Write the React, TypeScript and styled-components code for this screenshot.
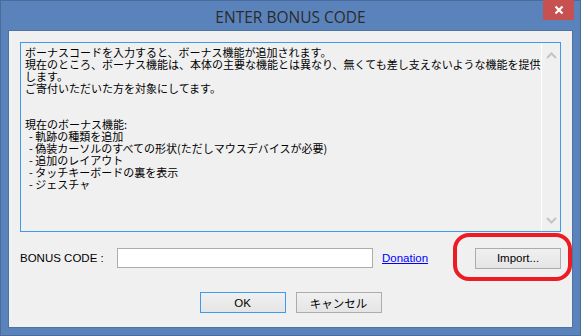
import React from "react";
import styled, { createGlobalStyle } from "styled-components";

const GlobalStyle = createGlobalStyle`
  html, body {
    margin: 0;
    padding: 0;
    background: #5b83bb;
  }
  body {
    font-family: "Liberation Sans", "Noto Sans CJK JP", sans-serif;
  }
`;

const infoLines: { text: string; item?: boolean }[] = [
  { text: "ボーナスコードを入力すると、ボーナス機能が追加されます。" },
  { text: "現在のところ、ボーナス機能は、本体の主要な機能とは異なり、無くても差し支えないような機能を提供" },
  { text: "します。" },
  { text: "ご寄付いただいた方を対象にしてます。" },
  { text: "" },
  { text: "" },
  { text: "現在のボーナス機能:" },
  { text: "- 軌跡の種類を追加", item: true },
  { text: "- 偽装カーソルのすべての形状(ただしマウスデバイスが必要)", item: true },
  { text: "- 追加のレイアウト", item: true },
  { text: "- タッチキーボードの裏を表示", item: true },
  { text: "- ジェスチャ", item: true },
];

export default function App() {
  return (
    <>
      <GlobalStyle />
      <Window>
        <TitleBar>
          <Title>ENTER BONUS CODE</Title>
          <CloseButton aria-label="close">
            <svg width="10" height="10" viewBox="0 0 10 10">
              <path d="M1.5 1.5 L8.5 8.5 M8.5 1.5 L1.5 8.5" stroke="#fff" strokeWidth="2.2" />
            </svg>
          </CloseButton>
        </TitleBar>
        <Client>
          <InfoBox>
            <InfoText>
              {infoLines.map((line, i) => (
                <Line key={i} $item={line.item}>
                  {line.text || "\u00a0"}
                </Line>
              ))}
            </InfoText>
            <ScrollBar>
              <svg width="11" height="7" viewBox="0 0 11 7">
                <path d="M1 6 L5.5 1.5 L10 6" fill="none" stroke="#c4c4c4" strokeWidth="2" />
              </svg>
              <svg width="11" height="7" viewBox="0 0 11 7">
                <path d="M1 1 L5.5 5.5 L10 1" fill="none" stroke="#c4c4c4" strokeWidth="2" />
              </svg>
            </ScrollBar>
          </InfoBox>
          <CodeRow>
            <Label>BONUS CODE :</Label>
            <CodeInput type="text" />
            <DonationLink href="#">Donation</DonationLink>
            <ImportWrap>
              <Button>Import...</Button>
              <Mark />
            </ImportWrap>
          </CodeRow>
          <ButtonRow>
            <Button $primary>OK</Button>
            <Button>キャンセル</Button>
          </ButtonRow>
        </Client>
      </Window>
    </>
  );
}

const Window = styled.div`
  width: 581px;
  height: 336px;
  box-sizing: border-box;
  background: #5b83bb;
  border: 1px solid #4a6c9c;
  padding: 0 7px 7px 7px;
  display: flex;
  flex-direction: column;
`;

const TitleBar = styled.div`
  height: 29px;
  position: relative;
  display: flex;
  align-items: center;
  justify-content: center;
`;

const Title = styled.div`
  font-family: "Open Sans", "Noto Sans", sans-serif;
  font-size: 15.5px;
  color: #2b2b2b;
  margin-top: 3px;
`;

const CloseButton = styled.div`
  position: absolute;
  top: -1px;
  right: -1px;
  width: 31px;
  height: 20px;
  background: #c75050;
  display: flex;
  align-items: center;
  justify-content: center;
`;

const Client = styled.div`
  flex: 1;
  background: #f0f0f0;
  border: 1px solid #4d72a5;
  padding: 11px 11px 14px 11px;
  display: flex;
  flex-direction: column;
`;

const InfoBox = styled.div`
  height: 188px;
  border: 1px solid #3c9bf0;
  background: #f0f0f0;
  display: flex;
`;

const InfoText = styled.div`
  flex: 1;
  padding: 3px 4px;
  font-family: "Noto Sans CJK JP", sans-serif;
  font-size: 11px;
  color: #000;
  overflow: hidden;
`;

const Line = styled.div<{ $item?: boolean }>`
  white-space: pre;
  height: 12px;
  line-height: 12px;
  padding-left: ${(p) => (p.$item ? "4px" : "0")};
`;

const ScrollBar = styled.div`
  width: 18px;
  border-left: 1px solid #ffffff;
  display: flex;
  flex-direction: column;
  justify-content: space-between;
  align-items: center;
  padding: 9px 0 7px;
`;

const CodeRow = styled.div`
  display: flex;
  align-items: center;
  margin-top: 15px;
  height: 22px;
`;

const Label = styled.span`
  width: 97px;
  font-size: 11.5px;
  color: #000;
`;

const CodeInput = styled.input`
  width: 256px;
  height: 20px;
  box-sizing: border-box;
  border: 1px solid #acacac;
  background: #fff;
  outline: none;
  margin: 0;
`;

const DonationLink = styled.a`
  margin-left: 9px;
  font-size: 11.5px;
  color: #0000ff;
  text-decoration: underline;
`;

const ImportWrap = styled.div`
  position: relative;
  margin-left: auto;
  display: flex;
`;

const Mark = styled.div`
  position: absolute;
  left: -22px;
  top: -15px;
  width: 119px;
  height: 48px;
  box-sizing: border-box;
  border: 4px solid #ed1c24;
  border-radius: 16px;
  pointer-events: none;
`;

const Button = styled.button<{ $primary?: boolean }>`
  width: 86px;
  height: 21px;
  box-sizing: border-box;
  padding: 0;
  margin: 0;
  font-family: "Liberation Sans", "Noto Sans CJK JP", sans-serif;
  font-size: 11.5px;
  color: #000;
  background: linear-gradient(#f0f0f0, #e5e5e5);
  border: 1px solid ${(p) => (p.$primary ? "#3c9bf0" : "#acacac")};
`;

const ButtonRow = styled.div`
  display: flex;
  justify-content: center;
  gap: 10px;
  margin-top: auto;
`;
